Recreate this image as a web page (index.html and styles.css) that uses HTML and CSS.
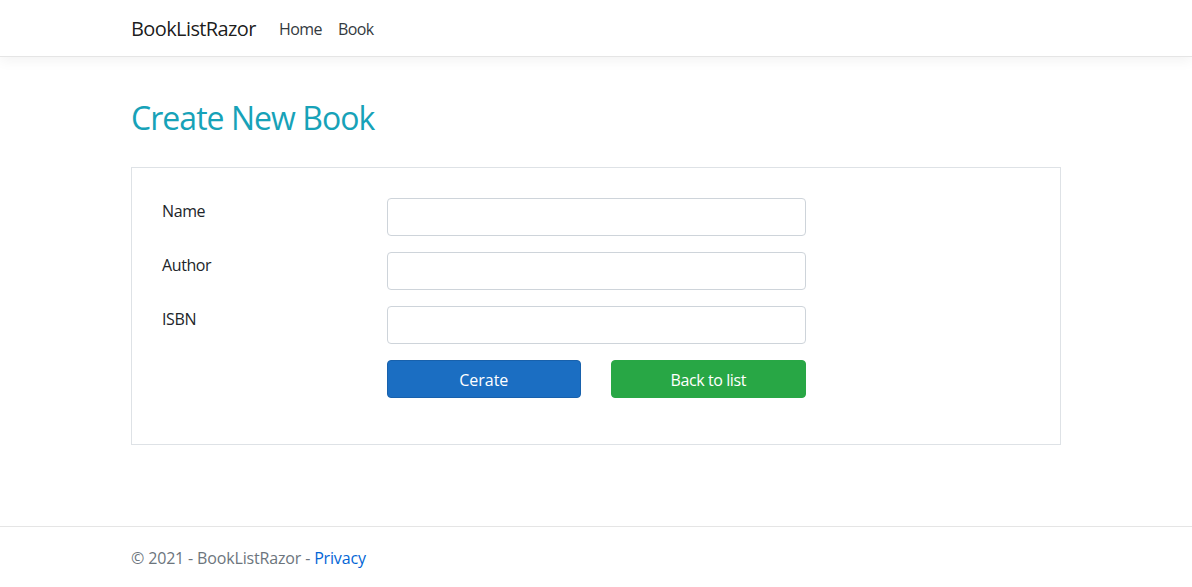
FILE: index.html
```html
<!DOCTYPE html>
<html lang="en">
<head>
<meta charset="utf-8">
<title>Create - BookListRazor</title>
<link rel="stylesheet" href="styles.css">
</head>
<body>
<header>
  <nav class="navbar">
    <div class="container nav-inner">
      <a class="brand" href="#">BookListRazor</a>
      <ul class="nav">
        <li><a class="nav-link" href="#">Home</a></li>
        <li><a class="nav-link" href="#">Book</a></li>
      </ul>
    </div>
  </nav>
</header>
<div class="container main">
  <br>
  <h2 class="title">Create New Book</h2>
  <br>
  <div class="form-box">
    <form>
      <div class="row">
        <div class="col-3"><label class="lbl">Name</label></div>
        <div class="col-6"><input class="form-control" type="text"></div>
      </div>
      <div class="row">
        <div class="col-3"><label class="lbl">Author</label></div>
        <div class="col-6"><input class="form-control" type="text"></div>
      </div>
      <div class="row">
        <div class="col-3"><label class="lbl">ISBN</label></div>
        <div class="col-6"><input class="form-control" type="text"></div>
      </div>
      <div class="row">
        <div class="col-3 offset-3"><button type="button" class="btn btn-primary">Cerate</button></div>
        <div class="col-3"><a class="btn btn-success" href="#">Back to list</a></div>
      </div>
    </form>
  </div>
</div>
<footer class="footer">
  <div class="container">&copy; 2021 - BookListRazor - <a class="privacy" href="#">Privacy</a></div>
</footer>
</body>
</html>
```
FILE: styles.css
```css
* { box-sizing: border-box; }
html { font-size: 16px; height: 100%; }
body {
  margin: 0;
  min-height: 100%;
  display: flex;
  flex-direction: column;
  font-family: "Open Sans", "Noto Sans", sans-serif;
  font-size: 16px;
  line-height: 1.5;
  letter-spacing: -0.025em;
  color: #212529;
  background: #fff;
}
a { text-decoration: none; }
.container {
  width: 100%;
  max-width: 960px;
  margin: 0 auto;
  padding: 0 15px;
}
.navbar {
  background: #fff;
  border-bottom: 1px solid #e5e5e5;
  box-shadow: 0 .25rem .75rem rgba(0,0,0,.05);
  padding: 8px 16px;
  margin-bottom: 16px;
}
.nav-inner { display: flex; align-items: center; }
.brand {
  font-size: 20px;
  line-height: 30px;
  padding: 6px 0 4px;
  margin-right: 15px;
  letter-spacing: -0.03em;
  color: rgba(0,0,0,.9);
}
.nav { list-style: none; margin: 0; padding: 0; display: flex; }
.nav-link { display: block; padding: 9px 8px 7px; color: #343a40; letter-spacing: -0.035em; }
.main { padding-bottom: 16px; }
.title {
  margin: 0 0 6px;
  padding-top: 2px;
  font-size: 32px;
  font-weight: 500;
  line-height: 1.2;
  letter-spacing: -0.03em;
  color: #17a2b8;
}
.form-box { border: 1px solid #dee2e6; padding: 30px; }
form { margin: 0; }
.row { display: flex; margin: 0 -15px 16px; }
.col-3, .col-6 { padding: 0 15px; }
.col-3 { flex: 0 0 25%; max-width: 25%; }
.col-6 { flex: 0 0 50%; max-width: 50%; }
.offset-3 { margin-left: 25%; }
.lbl { display: inline-block; margin-bottom: 8px; padding-top: 1px; }
.form-control {
  display: block;
  width: 100%;
  height: 38px;
  padding: 6px 12px;
  font: inherit;
  color: #495057;
  background: #fff;
  border: 1px solid #ced4da;
  border-radius: 4px;
}
.btn {
  display: block;
  width: 100%;
  height: 38px;
  padding: 7px 12px 5px;
  font: inherit;
  text-align: center;
  color: #fff;
  border: 1px solid transparent;
  border-radius: 4px;
  cursor: pointer;
}
.btn-primary { background: #1b6ec2; border-color: #1861ac; }
.btn-success { background: #28a745; border-color: #28a745; }
.footer {
  margin-top: auto;
  border-top: 1px solid #e5e5e5;
  line-height: 60px;
  white-space: nowrap;
  color: #6c757d;
}
.footer .container { padding-top: 2px; line-height: 58px; letter-spacing: -0.01em; }
.privacy { color: #0366d6; }
```
